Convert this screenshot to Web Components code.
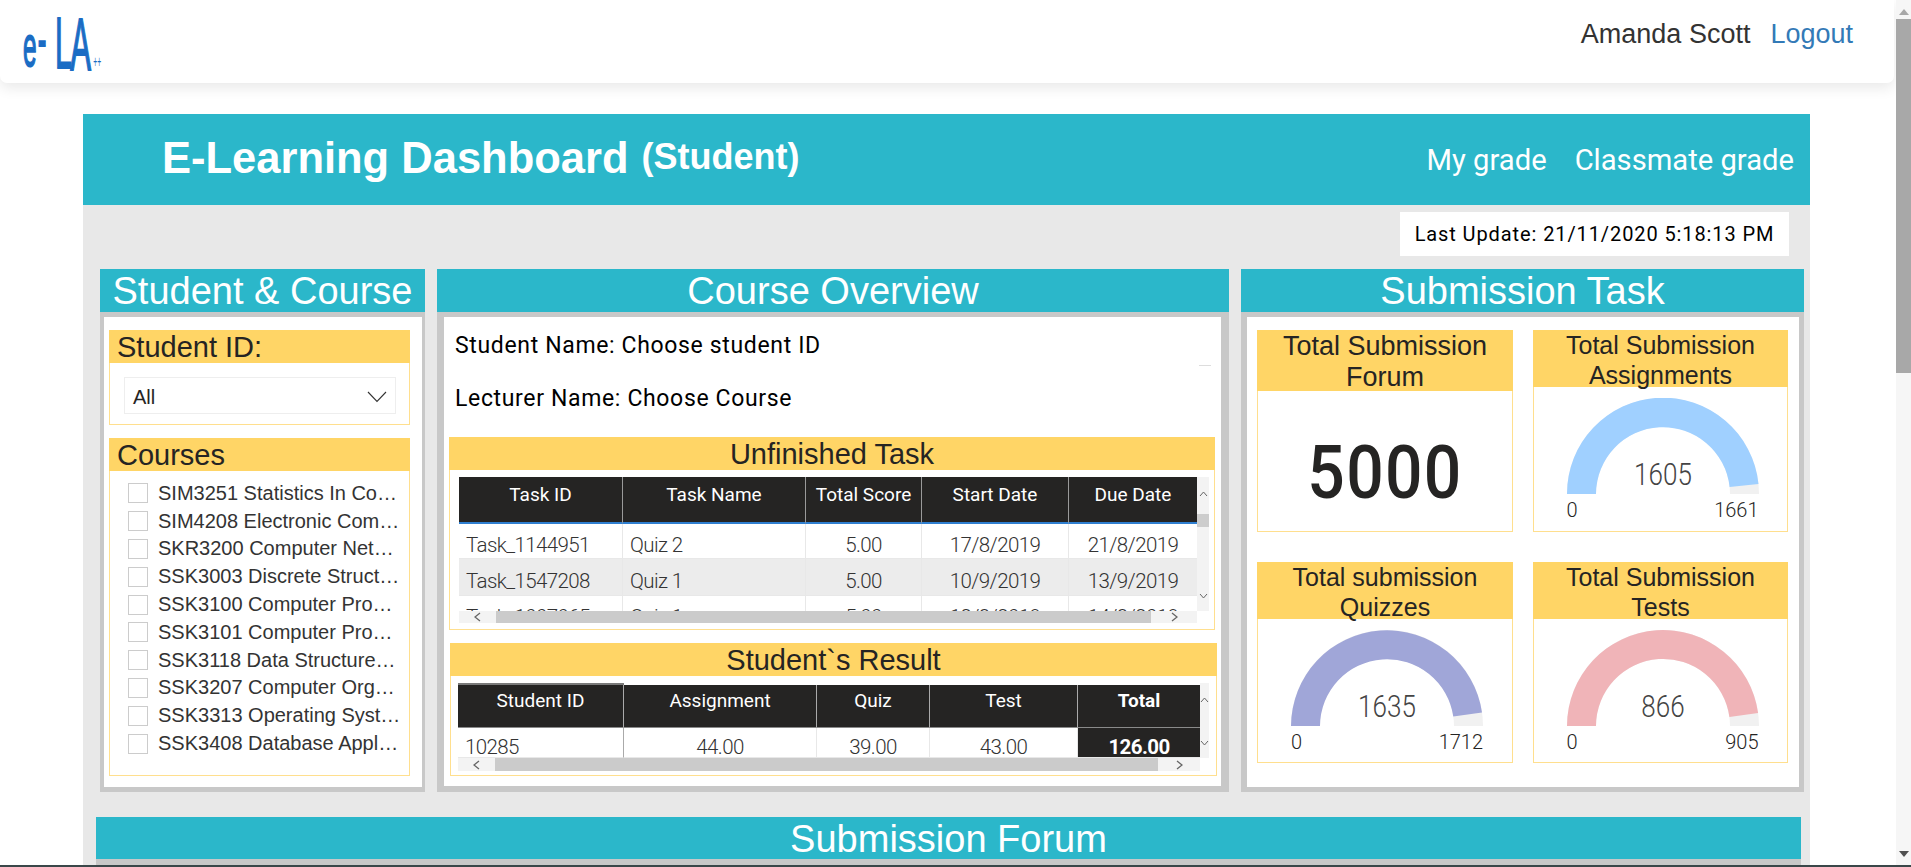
<!DOCTYPE html>
<html lang="en">
    <head>
        <meta charset="UTF-8" />
        <title>E-Learning Dashboard</title>
        <style>
            html, body { margin: 0; height: 867px; overflow: hidden; background: #fff; }
        </style>
    </head>
    <body>
        <app-shell>
            <top-nav user="Amanda Scott"></top-nav>
            <dash-board>
                <dash-banner slot="banner"></dash-banner>
                <update-stamp slot="stamp">Last Update: 21/11/2020 5:18:13 PM</update-stamp>

                <section-panel title="Student &amp; Course" style="--bl:4px;--br:3px;--bb:5px">
                    <div style="padding:13px 12px 0 5px;display:flex;flex-direction:column;gap:13px">
                        <yellow-card heading="Student ID:" style="height:95px"><slicer-dropdown>All</slicer-dropdown></yellow-card>
                        <yellow-card heading="Courses" style="height:338px">
                            <course-list>
                                <course-item>SIM3251 Statistics In Co…</course-item>
                                <course-item>SIM4208 Electronic Com…</course-item>
                                <course-item>SKR3200 Computer Net…</course-item>
                                <course-item>SSK3003 Discrete Struct…</course-item>
                                <course-item>SSK3100 Computer Pro…</course-item>
                                <course-item>SSK3101 Computer Pro…</course-item>
                                <course-item>SSK3118 Data Structure…</course-item>
                                <course-item>SSK3207 Computer Org…</course-item>
                                <course-item>SSK3313 Operating Syst…</course-item>
                                <course-item>SSK3408 Database Appl…</course-item>
                            </course-list>
                        </yellow-card>
                    </div>
                </section-panel>

                <section-panel title="Course Overview" style="--bl:7px;--br:8px;--bb:6px">
                    <overview-text>
                        <span>Student Name: Choose student ID</span>
                        <span>Lecturer Name: Choose Course</span>
                    </overview-text>
                    <div style="padding-left:5px">
                        <yellow-card heading="Unfinished Task" center style="width:766px;height:193px">
                            <data-table
                                style="--tw:738px;--vw:12px;--th:134px;--hh:12px;margin:7px 0 0 9px"
                                widths="164,183,116,147,128"
                                heads='["Task ID","Task Name","Total Score","Start Date","Due Date"]'
                                rows='[["Task_1144951","Quiz 2","5.00","17/8/2019","21/8/2019"],["Task_1547208","Quiz 1","5.00","10/9/2019","13/9/2019"],["Task_1007065","Quiz 1","5.00","12/3/2019","14/3/2019"]]'
                                left="2"
                                thumb="37,46"
                                vthumb
                            ></data-table>
                        </yellow-card>
                        <yellow-card heading="Student`s Result" center style="width:767px;height:133px;margin:13px 0 0 1px">
                            <data-table
                                variant="result"
                                style="--tw:742px;--vw:9px;--th:75px;--hh:13px;margin:7px 0 0 7px"
                                widths="166,193,113,148,122"
                                heads='["Student ID","Assignment","Quiz","Test","Total"]'
                                rows='[["10285","44.00","39.00","43.00","126.00"]]'
                                left="1"
                                thumb="37,42"
                            ></data-table>
                        </yellow-card>
                    </div>
                </section-panel>

                <section-panel title="Submission Task" style="--bl:6px;--br:5px;--bb:5px">
                    <div style="display:grid;grid-template-columns:256px 255px;grid-template-rows:202px 201px;gap:30px 20px;padding:13px 0 0 10px">
                        <yellow-card heading="Total Submission Forum" center tall><big-number>5000</big-number></yellow-card>
                        <yellow-card heading="Total Submission Assignments" center small><gauge-chart value="1605" max="1661" color="#a0d0ff"></gauge-chart></yellow-card>
                        <yellow-card heading="Total submission Quizzes" center small><gauge-chart value="1635" max="1712" color="#a0a6d8"></gauge-chart></yellow-card>
                        <yellow-card heading="Total Submission Tests" center small><gauge-chart value="866" max="905" color="#f0b4b8"></gauge-chart></yellow-card>
                    </div>
                </section-panel>

                <forum-strip slot="forum">Submission Forum</forum-strip>
            </dash-board>
        </app-shell>

        <script>
            const din = `Roboto, "Liberation Sans", sans-serif`
            const arial = `"Liberation Sans", Arial, sans-serif`

            class AppShell extends HTMLElement {
                constructor() {
                    super()
                    this.attachShadow({ mode: 'open' }).innerHTML = `
                    <style>
                        :host { display: block; width: 1911px; height: 867px; overflow: hidden; font-family: ${arial}; }
                        .row { display: flex; height: 865px; }
                        main { width: 1896px; overflow: hidden; }
                        .bar { width: 15px; background: #f6f6f6; display: flex; flex-direction: column; align-items: center; }
                        .up { width: 0; height: 0; margin-top: 9px; border: 5px solid transparent; border-top: 0; border-bottom: 6px solid #a8a8a8; }
                        .thumb { width: 15px; height: 354px; margin-top: 4px; background: #a8a8a8; }
                        .down { width: 0; height: 0; margin-top: auto; margin-bottom: 8px; border: 5px solid transparent; border-bottom: 0; border-top: 6px solid #505050; }
                        .edge { height: 2px; background: #3a4749; }
                    </style>
                    <div class="row">
                        <main><slot></slot></main>
                        <div class="bar"><div class="up"></div><div class="thumb"></div><div class="down"></div></div>
                    </div>
                    <div class="edge"></div>
                `
                }
            }

            class TopNav extends HTMLElement {
                constructor() {
                    super()
                    this.attachShadow({ mode: 'open' }).innerHTML = `
                    <style>
                        :host { display: flex; align-items: center; justify-content: space-between; width: 1894px; height: 83px; box-sizing: border-box; padding-right: 41px; background: #fff; border-radius: 0 0 7px 7px; box-shadow: 0 5px 14px rgba(0,0,0,.09); position: relative; font-size: 27px; }
                        svg { display: block; align-self: flex-start; margin-bottom: -9px; }
                        .who { display: flex; gap: 20px; margin-top: -14px; color: #333; }
                        a { color: #337ab7; text-decoration: none; }
                    </style>
                    <svg width="110" height="92" viewBox="0 0 110 92">
                        <text transform="scale(.42,1)" font-family="Liberation Sans" fill="#1a6cc4" stroke="#1a6cc4" stroke-width="1.800">
                            <tspan x="55" y="66" font-size="58">e</tspan><tspan x="90" y="60" font-size="62">-</tspan><tspan x="131" y="68" font-size="72">L</tspan><tspan x="167" y="70" font-size="74">A</tspan><tspan x="222" y="67" font-size="16" stroke-width="0">++</tspan>
                        </text>
                    </svg>
                    <div class="who"><span>${this.getAttribute('user')}</span><a href="#">Logout</a></div>
                `
                }
            }

            class DashBoard extends HTMLElement {
                constructor() {
                    super()
                    this.attachShadow({ mode: 'open' }).innerHTML = `
                    <style>
                        :host { display: block; width: 1727px; margin: 31px 0 0 83px; background: #e8e8e8; height: 900px; }
                        .stamp { display: flex; justify-content: flex-end; padding: 7px 21px 0 0; }
                        .grid { display: grid; grid-template-columns: 325px 792px 563px; column-gap: 12px; padding: 13px 0 0 17px; }
                        .forum { padding: 25px 0 0 13px; }
                    </style>
                    <slot name="banner"></slot>
                    <div class="stamp"><slot name="stamp"></slot></div>
                    <div class="grid"><slot></slot></div>
                    <div class="forum"><slot name="forum"></slot></div>
                `
                }
            }

            class DashBanner extends HTMLElement {
                constructor() {
                    super()
                    this.attachShadow({ mode: 'open' }).innerHTML = `
                    <style>
                        :host { display: flex; align-items: center; justify-content: space-between; height: 91px; box-sizing: border-box; padding: 0 16px 0 79px; background: #2bb7ca; color: #fff; }
                        .title { display: flex; align-items: baseline; gap: 13px; font-weight: 700; font-size: 43.500px; margin-top: -2px; }
                        .sub { font-size: 36px; position: relative; top: -4px; }
                        .links { display: flex; gap: 28px; font: 29.200px ${din}; }
                    </style>
                    <div class="title"><span>E-Learning Dashboard</span><span class="sub">(Student)</span></div>
                    <div class="links"><span>My grade</span><span>Classmate grade</span></div>
                `
                }
            }

            class UpdateStamp extends HTMLElement {
                constructor() {
                    super()
                    this.attachShadow({ mode: 'open' }).innerHTML = `
                    <style>
                        :host { display: flex; align-items: center; justify-content: center; width: 389px; height: 44px; background: #fff; color: #000; font: 20px ${din}; letter-spacing: .9px; }
                    </style>
                    <slot></slot>
                `
                }
            }

            class SectionPanel extends HTMLElement {
                constructor() {
                    super()
                    this.attachShadow({ mode: 'open' }).innerHTML = `
                    <style>
                        :host { display: block; height: 523px; }
                        h2 { margin: 0; height: 43px; line-height: 44px; background: #2bb7ca; color: #fff; font-weight: 400; font-size: 38px; text-align: center; }
                        .body { height: 480px; box-sizing: border-box; background: #fff; border: solid #c8c8c8; border-width: 5px var(--br) var(--bb) var(--bl); }
                    </style>
                    <h2>${this.getAttribute('title')}</h2>
                    <div class="body"><slot></slot></div>
                `
                }
            }

            class YellowCard extends HTMLElement {
                constructor() {
                    super()
                    this.attachShadow({ mode: 'open' }).innerHTML = `
                    <style>
                        :host { display: block; box-sizing: border-box; border: 1px solid #ffdf8e; background: #fff; }
                        h3 { margin: -1px -1px 0; height: 33px; line-height: 34px; background: #ffd566; color: #252423; font-weight: 400; font-size: 29px; padding-left: 8px; }
                        :host([center]) h3 { text-align: center; padding: 0; }
                        :host([small]) h3, :host([tall]) h3 { height: 57px; padding: 1px 20px 0; line-height: 29.500px; font-size: 25px; box-sizing: border-box; }
                        :host([tall]) h3 { font-size: 27px; height: 61px; line-height: 31px; }
                    </style>
                    <h3>${this.getAttribute('heading')}</h3>
                    <slot></slot>
                `
                }
            }

            class SlicerDropdown extends HTMLElement {
                constructor() {
                    super()
                    this.attachShadow({ mode: 'open' }).innerHTML = `
                    <style>
                        :host { display: flex; align-items: center; justify-content: space-between; box-sizing: border-box; width: 272px; height: 37px; margin: 14px 0 0 14px; padding: 3px 8px 0 8px; border: 1.5px solid #eee; color: #252423; font-size: 20px; }
                        svg { margin-top: -1px; }
                    </style>
                    <slot></slot>
                    <svg width="20" height="12" viewBox="0 0 20 12"><path d="M1 1l9 9.500L19 1" fill="none" stroke="#333" stroke-width="1.1"/></svg>
                `
                }
            }

            class CourseList extends HTMLElement {
                constructor() {
                    super()
                    this.attachShadow({ mode: 'open' }).innerHTML = `
                    <style>
                        :host { display: block; padding: 8.500px 0 0 18px; }
                    </style>
                    <slot></slot>
                `
                }
            }

            class CourseItem extends HTMLElement {
                constructor() {
                    super()
                    this.attachShadow({ mode: 'open' }).innerHTML = `
                    <style>
                        :host { display: flex; align-items: center; gap: 10px; height: 27.800px; color: #333; font-size: 20px; white-space: nowrap; }
                        i { width: 20px; height: 20px; box-sizing: border-box; border: 1.5px solid #ccc; flex: none; }
                    </style>
                    <i></i><span><slot></slot></span>
                `
                }
            }

            class OverviewText extends HTMLElement {
                constructor() {
                    super()
                    this.attachShadow({ mode: 'open' }).innerHTML = `
                    <style>
                        :host { display: block; height: 120px; box-sizing: border-box; padding: 2px 0 0 11px; position: relative; color: #000; font: 23px/53px ${din}; letter-spacing: .65px; }
                        ::slotted(span) { display: block; }
                        .dash { position: absolute; top: 48px; right: 10px; width: 12px; height: 1px; background: #ddd; }
                    </style>
                    <slot></slot>
                    <div class="dash"></div>
                `
                }
            }

            class DataTable extends HTMLElement {
                constructor() {
                    super()
                    const widths = this.getAttribute('widths').split(',')
                    const heads = JSON.parse(this.getAttribute('heads'))
                    const rows = JSON.parse(this.getAttribute('rows'))
                    const left = +this.getAttribute('left')
                    const [tl, tr] = this.getAttribute('thumb').split(',')
                    const up = `<svg width="9" height="6" viewBox="0 0 9 6"><path d="M1 5l3.500-4L8 5" fill="none" stroke="#666"/></svg>`
                    const down = `<svg width="9" height="6" viewBox="0 0 9 6"><path d="M1 1l3.500 4L8 1" fill="none" stroke="#666"/></svg>`
                    const back = `<svg width="7" height="10" viewBox="0 0 7 10"><path d="M6 1L1 5l5 4" fill="none" stroke="#666" stroke-width="1.300"/></svg>`
                    const next = `<svg width="7" height="10" viewBox="0 0 7 10"><path d="M1 1l5 4-5 4" fill="none" stroke="#666" stroke-width="1.300"/></svg>`
                    this.attachShadow({ mode: 'open' }).innerHTML = `
                    <style>
                        :host { display: grid; grid-template-columns: var(--tw) var(--vw); grid-template-rows: var(--th) var(--hh); width: calc(var(--tw) + var(--vw)); }
                        .view { overflow: hidden; }
                        table { border-collapse: separate; border-spacing: 0; table-layout: fixed; width: var(--tw); font: 19px ${din}; }
                        th { height: 47px; padding: 6px 0 0; box-sizing: border-box; vertical-align: top; background: #252423; color: #fff; font-weight: 400; line-height: 24px; border-right: 1px solid #9a9a9a; border-bottom: 2px solid #2f7fd0; }
                        th:last-child { border-right: 0; }
                        td { height: 35px; padding: 7px 0 0; box-sizing: border-box; color: #333; font-weight: 300; font-size: 20.500px; line-height: 20px; letter-spacing: -.6px; text-align: center; border-right: 1px solid #e8e8e8; border-bottom: 1px solid #e8e8e8; }
                        td:last-child { border-right: 0; }
                        td.l { text-align: left; padding-left: 7px; }
                        tr:nth-child(3) td { background: #ececec; height: 37px; }
                        :host([variant=result]) table { margin-top: 2px; }
                        :host([variant=result]) th { height: 43px; border-bottom: 1px solid #8a8a8a; border-right-color: #aaa; line-height: 26px; padding-top: 3px; }
                        :host([variant=result]) th:first-child { box-shadow: 0 -2px 0 #7a7a7a; }
                        :host([variant=result]) th:last-child, :host([variant=result]) td:last-child { font-weight: 700; }
                        :host([variant=result]) td { height: 30px; padding-top: 8px; }
                        :host([variant=result]) td:first-child { border-right-color: #aaa; }
                        :host([variant=result]) td:last-child { background: #252423; color: #fff; }
                        .v { background: #f3f3f3; display: flex; flex-direction: column; align-items: center; justify-content: space-between; padding: 14px 0 12px; box-sizing: border-box; position: relative; }
                        .v i { position: absolute; left: 0; right: 0; top: 37px; height: 13px; background: #cdcdcd; }
                        .h { display: flex; align-items: center; background: #f3f3f3; }
                        .h b { flex: 1; height: 100%; background: #cbcbcb; }
                        .h span { display: flex; align-items: center; justify-content: center; box-sizing: border-box; height: 100%; }
                        .h svg, .v svg { display: block; }
                    </style>
                    <div class="view">
                        <table>
                            <colgroup>${widths.map(w => `<col style="width:${w}px">`).join('')}</colgroup>
                            <tr>${heads.map(h => `<th>${h}</th>`).join('')}</tr>
                            ${rows.map(r => `<tr>${r.map((c, i) => `<td class="${i < left ? 'l' : ''}">${c}</td>`).join('')}</tr>`).join('')}
                        </table>
                    </div>
                    <div class="v">${up}${this.hasAttribute('vthumb') ? '<i></i>' : ''}${down}</div>
                    <div class="h"><span style="width:${tl}px">${back}</span><b></b><span style="width:${tr}px">${next}</span></div>
                `
                }
            }

            class BigNumber extends HTMLElement {
                constructor() {
                    super()
                    this.attachShadow({ mode: 'open' }).innerHTML = `
                    <style>
                        :host { display: block; text-align: center; padding-top: 36px; color: #252423; font: 500 75px/90px ${din}; letter-spacing: 1.500px; transform: scaleX(.88); }
                    </style>
                    <slot></slot>
                `
                }
            }

            class GaugeChart extends HTMLElement {
                constructor() {
                    super()
                    const value = +this.getAttribute('value')
                    const max = +this.getAttribute('max')
                    const R = 96, r = 67
                    const a = Math.PI * (1 - value / max)
                    const pt = (rad) => `${(96 + rad * Math.cos(a)).toFixed(1)} ${(96 - rad * Math.sin(a)).toFixed(1)}`
                    this.attachShadow({ mode: 'open' }).innerHTML = `
                    <style>
                        :host { display: block; width: 192px; margin: 11px auto 0; position: relative; left: 2px; font: 300 20px ${din}; color: #252423; }
                        svg { display: block; }
                        .val { position: absolute; left: 0; right: 0; top: 58px; text-align: center; font-size: 31px; color: #444; transform: scaleX(.84); }
                        .ends { display: flex; justify-content: space-between; margin-top: 4px; line-height: 24px; }
                    </style>
                    <svg width="192" height="96" viewBox="0 0 192 96">
                        <path d="M0 96A${R} ${R} 0 0 1 192 96H${96 + r}A${r} ${r} 0 0 0 ${96 - r} 96Z" fill="#f1f1f1"/>
                        <path d="M0 96A${R} ${R} 0 0 1 ${pt(R)}L${pt(r)}A${r} ${r} 0 0 0 ${96 - r} 96Z" fill="${this.getAttribute('color')}"/>
                    </svg>
                    <div class="val">${value}</div>
                    <div class="ends"><span>0</span><span>${max}</span></div>
                `
                }
            }

            class ForumStrip extends HTMLElement {
                constructor() {
                    super()
                    this.attachShadow({ mode: 'open' }).innerHTML = `
                    <style>
                        :host { display: block; width: 1705px; }
                        h2 { margin: 0; height: 42px; line-height: 44px; background: #2bb7ca; color: #fff; font-weight: 400; font-size: 38px; text-align: center; }
                        div { height: 6px; background: #c8c8c8; }
                    </style>
                    <h2><slot></slot></h2>
                    <div></div>
                `
                }
            }

            customElements.define('app-shell', AppShell)
            customElements.define('top-nav', TopNav)
            customElements.define('dash-board', DashBoard)
            customElements.define('dash-banner', DashBanner)
            customElements.define('update-stamp', UpdateStamp)
            customElements.define('section-panel', SectionPanel)
            customElements.define('yellow-card', YellowCard)
            customElements.define('slicer-dropdown', SlicerDropdown)
            customElements.define('course-list', CourseList)
            customElements.define('course-item', CourseItem)
            customElements.define('overview-text', OverviewText)
            customElements.define('data-table', DataTable)
            customElements.define('big-number', BigNumber)
            customElements.define('gauge-chart', GaugeChart)
            customElements.define('forum-strip', ForumStrip)
        </script>
    </body>
</html>
